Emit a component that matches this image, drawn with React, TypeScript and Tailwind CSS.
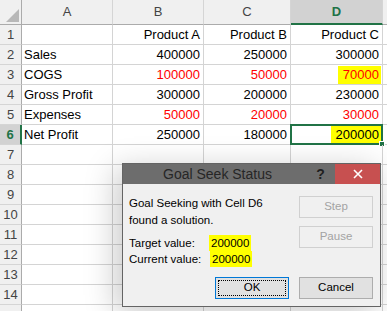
import React from "react";

type Cell = { t: string; red?: boolean; hl?: boolean; left?: boolean };

const widths = ["w-[91px]", "w-[91px]", "w-[87px]", "w-[92px]"];

const data: Cell[][] = [
  [{ t: "", left: true }, { t: "Product A" }, { t: "Product B" }, { t: "Product C" }],
  [{ t: "Sales", left: true }, { t: "400000" }, { t: "250000" }, { t: "300000" }],
  [{ t: "COGS", left: true }, { t: "100000", red: true }, { t: "50000", red: true }, { t: "70000", red: true, hl: true }],
  [{ t: "Gross Profit", left: true }, { t: "300000" }, { t: "200000" }, { t: "230000" }],
  [{ t: "Expenses", left: true }, { t: "50000", red: true }, { t: "20000", red: true }, { t: "30000", red: true }],
  [{ t: "Net Profit", left: true }, { t: "250000" }, { t: "180000" }, { t: "200000", hl: true }],
];

const rowNums = Array.from({ length: 15 }, (_, i) => i + 1);

export default function App() {
  return (
    <div className="relative w-[387px] h-[311px] overflow-hidden bg-white text-[13px] text-black [font-family:'Liberation_Sans',Arial,sans-serif]">
      {/* Column header row */}
      <div className="flex h-[25px] bg-[#f0f0f0]">
        <div className="relative w-[22px] shrink-0 border-r border-b border-[#ababab]">
          <svg className="absolute right-[2px] bottom-[2px]" width="13" height="13" viewBox="0 0 13 13">
            <polygon points="13,0 13,13 0,13" fill="#b8b8b8" />
          </svg>
        </div>
        {["A", "B", "C"].map((c, i) => (
          <div
            key={c}
            className={`${widths[i]} shrink-0 flex items-center justify-center border-r border-r-[#d5d5d5] border-b border-b-[#ababab] text-[#444]`}
          >
            {c}
          </div>
        ))}
        <div className="w-[92px] shrink-0 flex items-center justify-center bg-[#d2d2d2] border-r border-r-[#d5d5d5] border-b-2 border-b-[#217346] text-[#217346] font-bold">
          D
        </div>
        <div className="flex-1 border-b border-[#ababab]" />
      </div>

      {/* Data rows */}
      {rowNums.map((n) => {
        const row = data[n - 1];
        const sel = n === 6;
        return (
          <div key={n} className="flex h-[20px]">
            <div
              className={`w-[22px] shrink-0 flex items-center justify-center border-b border-b-[#d5d5d5] ${
                sel
                  ? "bg-[#d2d2d2] border-r-2 border-r-[#217346] text-[#217346] font-bold"
                  : "bg-[#f0f0f0] border-r border-r-[#ababab] text-[#444]"
              }`}
            >
              {n < 15 ? n : ""}
            </div>
            {[0, 1, 2, 3].map((ci) => {
              const cell = row ? row[ci] : undefined;
              const isSel = sel && ci === 3;
              return (
                <div
                  key={ci}
                  className={`relative ${widths[ci]} shrink-0 flex items-center border-r border-b border-[#d4d4d4] ${
                    cell && cell.left ? "justify-start pl-[2px]" : "justify-end pr-[3px]"
                  }`}
                >
                  {cell && cell.t && (
                    <span
                      className={`${cell.red ? "text-[#ff0000]" : "text-black"} ${
                        cell.hl ? "bg-[#ffff00] pl-[5px] -mr-[2px] pr-[2px] leading-[18px]" : ""
                      }`}
                    >
                      {cell.t}
                    </span>
                  )}
                  {isSel && (
                    <>
                      <div className="absolute -left-[1px] -top-[1px] -right-[1px] -bottom-[1px] border-2 border-[#217346]" />
                      <div className="absolute -right-[3px] -bottom-[3px] w-[6px] h-[6px] bg-[#217346] border border-white" />
                    </>
                  )}
                </div>
              );
            })}
            <div className="flex-1 border-b border-[#d4d4d4]" />
          </div>
        );
      })}

      {/* Goal Seek Status dialog */}
      <div className="absolute left-[122px] top-[163px] w-[259px] h-[144px] flex flex-col border border-[#646464] bg-[#f0f0f0] shadow-[-6px_6px_30px_rgba(0,0,0,0.22)] text-[11.5px]">
        <div className="flex h-[20px] shrink-0 items-center bg-[#6d6d6d]">
          <div className="flex-1 pl-[6px] text-center text-[14px] text-[#262626]">Goal Seek Status</div>
          <div className="w-[29px] text-center text-[14px] font-bold text-[#1f1f1f]">?</div>
          <div className="w-[45px] h-full flex items-center justify-center bg-[#c75050]">
            <svg width="10" height="10" viewBox="0 0 10 10">
              <path d="M1 1 L9 9 M9 1 L1 9" stroke="white" strokeWidth="1.6" />
            </svg>
          </div>
        </div>
        <div className="flex-1 flex flex-col pl-[6px] pr-[7px] pb-[7px]">
          <div className="flex">
            <div className="flex-1 flex flex-col pt-[11px] leading-[17px]">
              <div>Goal Seeking with Cell D6</div>
              <div>found a solution.</div>
              <div className="mt-[6px] flex leading-[16px]">
                <span className="w-[80px]">Target value:</span>
                <span className="bg-[#ffff00] px-[2px]">200000</span>
              </div>
              <div className="flex leading-[16px]">
                <span className="w-[81px]">Current value:</span>
                <span className="bg-[#ffff00] px-[2px]">200000</span>
              </div>
            </div>
            <div className="w-[74px] flex flex-col gap-[8px] pt-[12px]">
              <div className="h-[22px] flex items-center justify-center border border-[#d0d0d0] bg-[#f0f0f0] text-[#a3a3a3]">
                Step
              </div>
              <div className="h-[22px] flex items-center justify-center border border-[#d0d0d0] bg-[#f0f0f0] text-[#a3a3a3]">
                Pause
              </div>
            </div>
          </div>
          <div className="flex-1" />
          <div className="flex justify-end gap-[10px]">
            <div className="w-[74px] h-[22px] p-[2px] border border-[#0078d7] bg-[#e1e1e1]">
              <div className="w-full h-full flex items-center justify-center border border-dotted border-black">
                OK
              </div>
            </div>
            <div className="w-[74px] h-[22px] flex items-center justify-center border border-[#adadad] bg-[#e1e1e1]">
              Cancel
            </div>
          </div>
        </div>
      </div>
    </div>
  );
}
